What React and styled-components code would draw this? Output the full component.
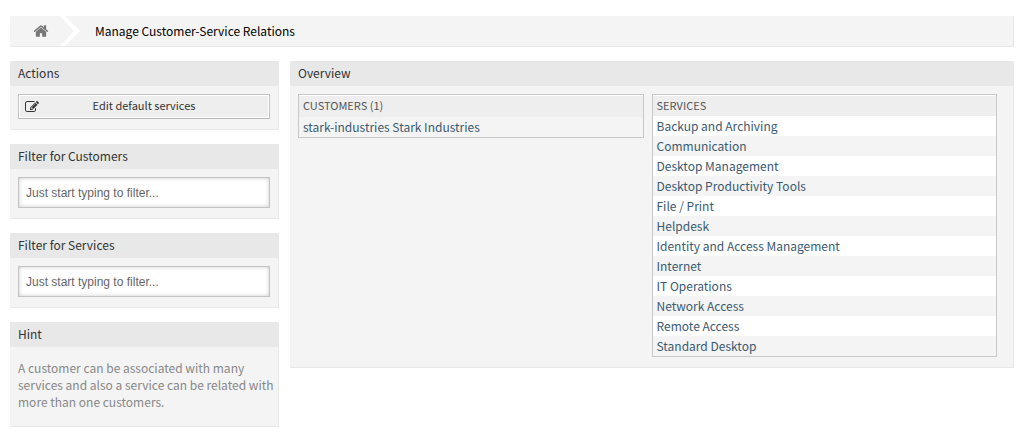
import React from "react";
import styled, { createGlobalStyle } from "styled-components";

const GlobalStyle = createGlobalStyle`
  *, *::before, *::after { box-sizing: border-box; }
  body {
    margin: 0;
    background: #fff;
    color: #333;
    font-family: "Source Sans Pro", "Noto Sans CJK JP", sans-serif;
    font-size: 12px;
    line-height: 17px;
  }
`;

const Page = styled.div`
  padding: 16px 11px 20px 10px;
`;

const Breadcrumb = styled.nav`
  display: flex;
  align-items: center;
  height: 31px;
  margin-bottom: 14px;
  background: #f4f4f4;
  border-right: 1px solid #e8e8e8;
  border-bottom: 1px solid #e8e8e8;
  border-radius: 1px;
`;

const HomeLink = styled.a`
  display: flex;
  padding: 0 11px 0 23px;
  color: #777;
`;

const Separator = styled.svg`
  width: 20px;
  height: 30px;
  fill: #fff;
`;

const Icon = styled.svg`
  width: ${(p) => p.$size}px;
  height: ${(p) => p.$size}px;
  fill: currentColor;
`;

const Title = styled.h1`
  margin: 0 0 0 15px;
  padding-bottom: 2px;
  font-size: 12px;
  font-weight: 400;
  color: #000;
`;

const Columns = styled.div`
  display: grid;
  grid-template-columns: 269fr 724fr;
  gap: 11px;
  align-items: start;
`;

const Sidebar = styled.aside`
  display: flex;
  flex-direction: column;
  gap: 14px;
`;

const Panel = styled.section`
  background: #f4f4f4;
  border-right: 1px solid #e8e8e8;
  border-bottom: 1px solid #e8e8e8;
  border-radius: 1px;
`;

const PanelHeader = styled.h2`
  margin: 0 -1px 0 0;
  padding: 3px 8px 5px;
  background: #e8e8e8;
  border-radius: 1px;
  font-size: 12px;
  font-weight: 400;
`;

const PanelBody = styled.div`
  padding: 8px 8px 10px;
`;

const ActionButton = styled.button`
  display: flex;
  align-items: center;
  width: 100%;
  height: 25px;
  padding: 0 6px;
  border: 1px solid #c3c3c3;
  border-bottom-color: #b8b8b8;
  background: #eee;
  box-shadow: inset 0 0 0 1px #fff;
  color: #333;
  font: inherit;
  font-size: 11px;
  cursor: pointer;
`;

const ButtonLabel = styled.span`
  flex: 1;
  padding: 0 14px 2px 0;
  text-align: center;
`;

const FilterInput = styled.input`
  display: block;
  width: 100%;
  height: 31px;
  padding: 0 7px;
  border: 1px solid #c3c3c3;
  background: #fff;
  box-shadow: inset 0 0 4px #ccc;
  font-family: "Liberation Sans", Arial, sans-serif;
  font-size: 12px;

  &::placeholder {
    color: #666;
    opacity: 1;
  }
`;

const Hint = styled.p`
  margin: 0;
  padding: 12px 0 16px 8px;
  color: #888;
`;

const Lists = styled.div`
  display: grid;
  grid-template-columns: 1fr 1fr;
  gap: 8px;
  align-items: start;
  padding: 8px 16px 10px 8px;
`;

const ListFrame = styled.div`
  padding-top: 1px;
  border: 1px solid #c8c8c8;
  background: #fff;
`;

const List = styled.table`
  width: 100%;
  border-collapse: collapse;
`;

const ListHead = styled.th`
  height: ${(p) => (p.$tall ? 21 : 20)}px;
  padding: 0 4px 2px;
  background: #eee;
  color: #555;
  font-size: 11px;
  font-weight: 400;
  text-align: left;
  text-transform: uppercase;
`;

const ListRow = styled.tr`
  background: ${(p) => (p.$shaded ? "#f4f4f4" : "#fff")};
`;

const ListCell = styled.td`
  height: 20px;
  padding: 0 4px 2px;
`;

const ItemLink = styled.a`
  display: block;
  color: #3b5a70;
  text-decoration: none;
`;

const HomeIcon = () => (
  <Icon $size={16} viewBox="0 0 1792 1792" aria-hidden="true">
    <path d="M1472 992v480q0 26-19 45t-45 19h-384v-384h-256v384h-384q-26 0-45-19t-19-45v-480q0-1 .5-3t.5-3l575-474 575 474q1 2 1 6zm223-69l-62 74q-8 9-21 11h-3q-13 0-21-7l-692-577-692 577q-12 8-24 7-13-2-21-11l-62-74q-8-10-7-23.5t11-21.5l719-599q32-26 76-26t76 26l244 204v-195q0-14 9-23t23-9h192q14 0 23 9t9 23v408l219 182q10 8 11 21.5t-7 23.5z" />
  </Icon>
);

const EditIcon = () => (
  <Icon $size={14} viewBox="0 0 1792 1792" aria-hidden="true">
    <path d="M888 1184l116-116-152-152-116 116v56h96v96h56zm440-720q-16-16-33 1l-350 350q-17 17-1 33t33-1l350-350q17-17 1-33zm80 594v190q0 119-84.5 203.5t-203.5 84.5h-832q-119 0-203.5-84.5t-84.5-203.5v-832q0-119 84.5-203.5t203.5-84.5h832q63 0 117 25 15 7 18 23 3 17-9 29l-49 49q-14 14-32 8-23-6-45-6h-832q-66 0-113 47t-47 113v832q0 66 47 113t113 47h832q66 0 113-47t47-113v-126q0-13 9-22l64-64q15-15 35-7t20 29zm-96-738l288 288-672 672h-288v-288zm444 132l-92 92-288-288 92-92q28-28 68-28t68 28l152 152q28 28 28 68t-28 68z" />
  </Icon>
);

const customers = ["stark-industries Stark Industries"];

const services = [
  "Backup and Archiving",
  "Communication",
  "Desktop Management",
  "Desktop Productivity Tools",
  "File / Print",
  "Helpdesk",
  "Identity and Access Management",
  "Internet",
  "IT Operations",
  "Network Access",
  "Remote Access",
  "Standard Desktop",
];

function FilterPanel({ title }) {
  return (
    <Panel>
      <PanelHeader>{title}</PanelHeader>
      <PanelBody>
        <FilterInput type="text" aria-label={title} placeholder="Just start typing to filter..." />
      </PanelBody>
    </Panel>
  );
}

function ItemList({ heading, items, tallHead = false, firstShaded = false }) {
  return (
    <ListFrame>
      <List>
        <thead>
          <tr>
            <ListHead scope="col" $tall={tallHead}>
              {heading}
            </ListHead>
          </tr>
        </thead>
        <tbody>
          {items.map((item, i) => (
            <ListRow key={item} $shaded={(i % 2 === 0) === firstShaded}>
              <ListCell>
                <ItemLink href="#">{item}</ItemLink>
              </ListCell>
            </ListRow>
          ))}
        </tbody>
      </List>
    </ListFrame>
  );
}

export default function App() {
  return (
    <>
      <GlobalStyle />
      <Page>
        <Breadcrumb aria-label="Breadcrumb">
          <HomeLink href="#" aria-label="Home">
            <HomeIcon />
          </HomeLink>
          <Separator viewBox="0 0 20 30" aria-hidden="true">
            <path d="M0 0h5l15 15-15 15H0l14-15z" />
          </Separator>
          <Title>Manage Customer-Service Relations</Title>
        </Breadcrumb>
        <Columns>
          <Sidebar>
            <Panel>
              <PanelHeader>Actions</PanelHeader>
              <PanelBody>
                <ActionButton type="button">
                  <EditIcon />
                  <ButtonLabel>Edit default services</ButtonLabel>
                </ActionButton>
              </PanelBody>
            </Panel>
            <FilterPanel title="Filter for Customers" />
            <FilterPanel title="Filter for Services" />
            <Panel>
              <PanelHeader>Hint</PanelHeader>
              <Hint>
                A customer can be associated with many services and also a service can be related
                with more than one customers.
              </Hint>
            </Panel>
          </Sidebar>
          <Panel as="main">
            <PanelHeader>Overview</PanelHeader>
            <Lists>
              <ItemList heading="Customers (1)" items={customers} tallHead firstShaded />
              <ItemList heading="Services" items={services} />
            </Lists>
          </Panel>
        </Columns>
      </Page>
    </>
  );
}
